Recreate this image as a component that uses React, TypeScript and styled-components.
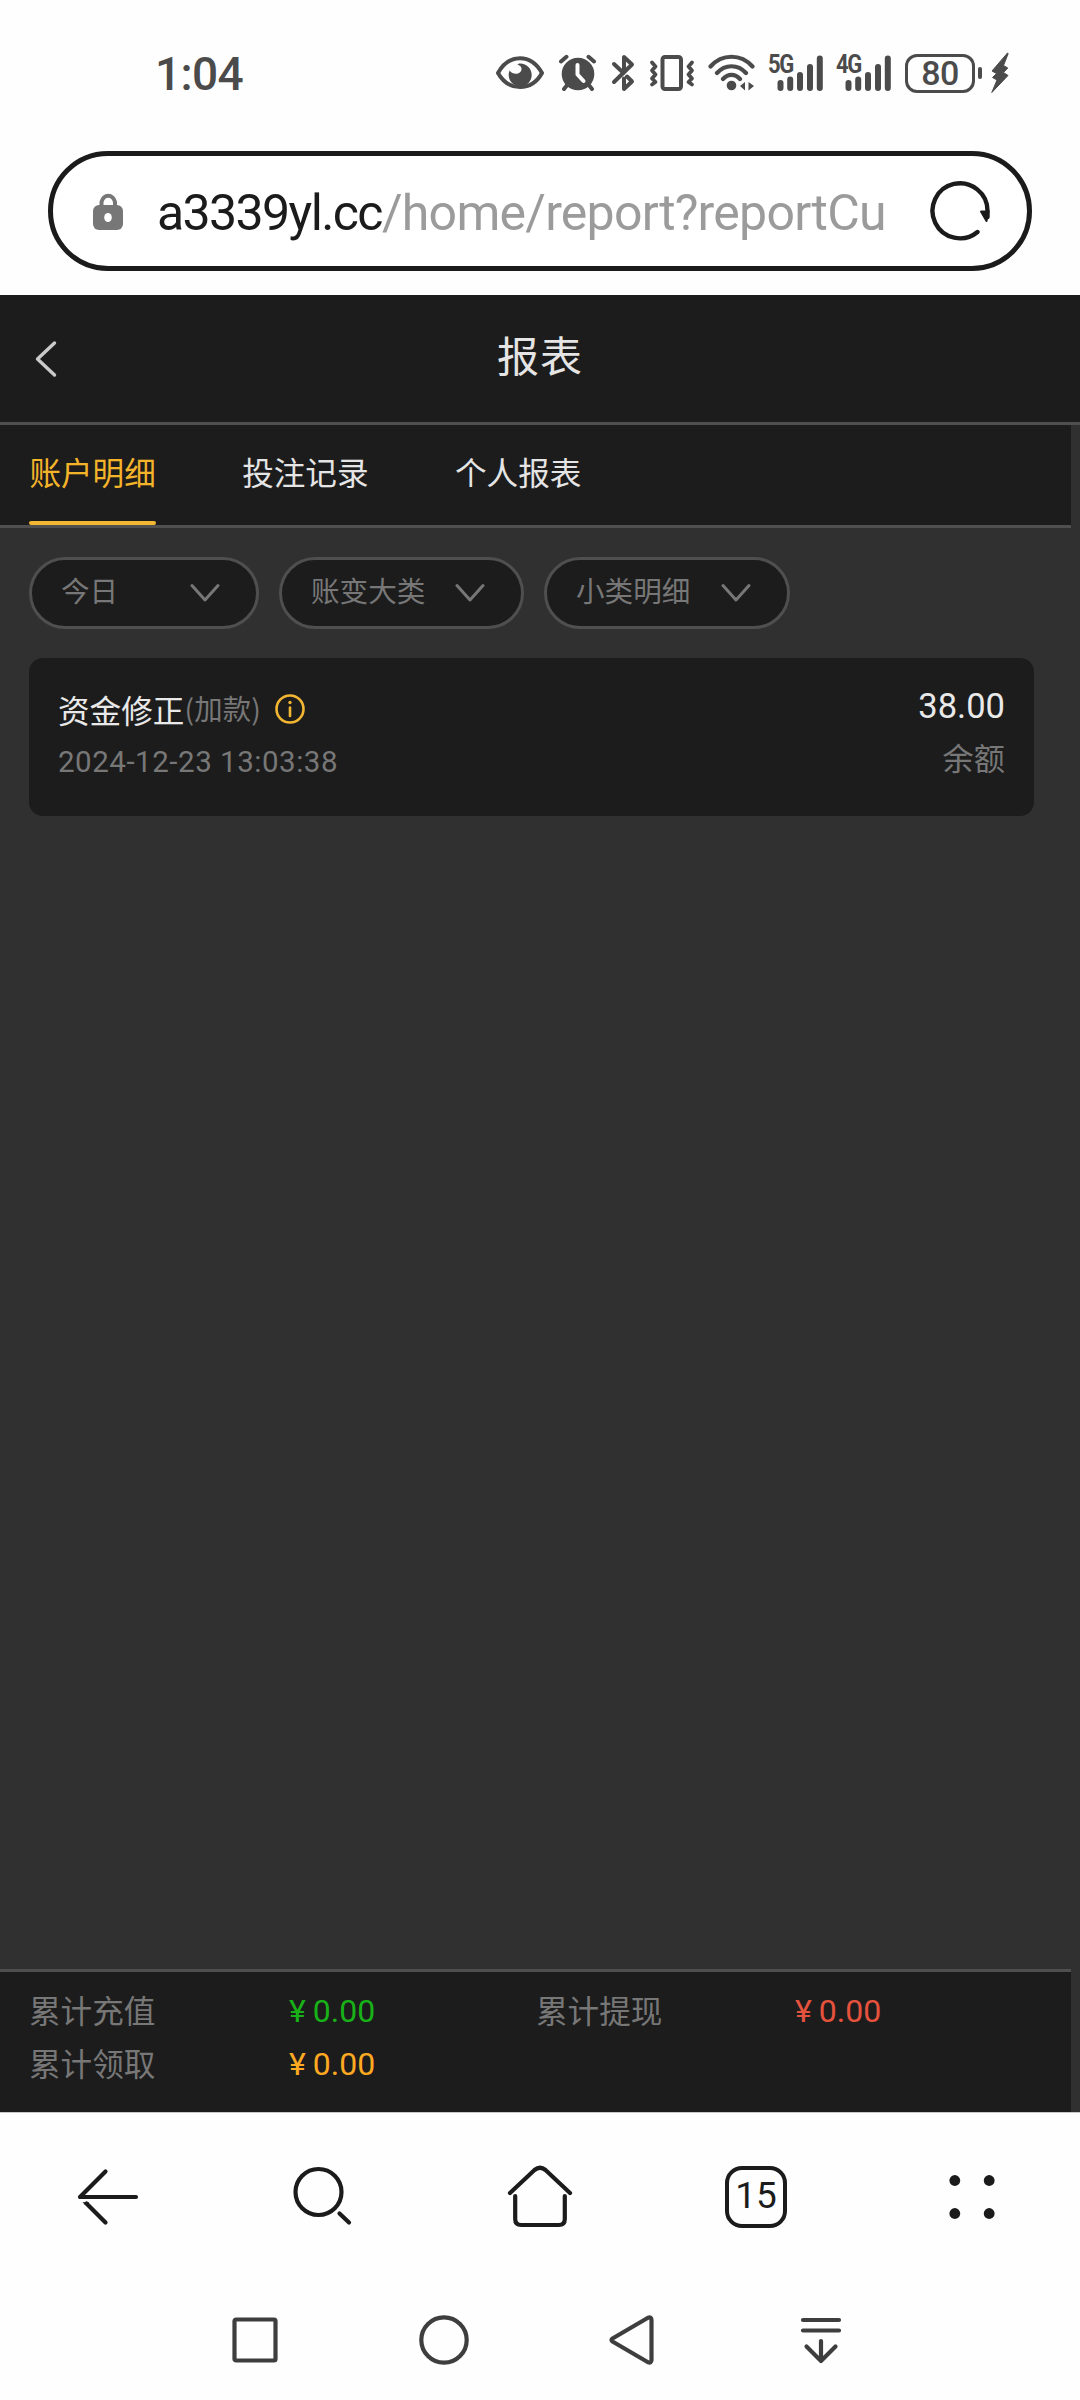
import React from "react";
import styled, { createGlobalStyle } from "styled-components";

const GlobalStyle = createGlobalStyle`
  * { box-sizing: border-box; }
  body { margin: 0; background: #fff; }
`;

const latin = `Roboto, "Noto Sans CJK SC", sans-serif`;
const cjk = `"Noto Sans CJK SC", Roboto, sans-serif`;

const Screen = styled.div`
  width: 1080px;
  height: 2400px;
  display: flex;
  flex-direction: column;
  background: #fefefe;
  font-family: ${cjk};
  overflow: hidden;
  svg { display: block; flex: none; }
`;

const StatusBar = styled.div`
  height: 151px;
  flex: none;
  display: flex;
  justify-content: space-between;
  align-items: flex-start;
  padding: 49px 71px 0 155px;
`;
const Clock = styled.div`
  font: 500 46px/50px ${latin};
  letter-spacing: -0.6px;
  color: #4b4b4b;
`;
const StatusIcons = styled.div`
  display: flex;
  align-items: center;
  height: 48px;
`;
const Slot = styled.div<{ $gap?: number }>`
  margin-left: ${(p) => p.$gap ?? 0}px;
`;
const SignalBox = styled.div`
  position: relative;
  width: 55px;
  height: 38px;
`;
const SignalTag = styled.span`
  position: absolute;
  left: -1px;
  top: -1px;
  font: 700 25px/24px ${latin};
  letter-spacing: -1.5px;
  transform: scaleX(0.88);
  transform-origin: left;
  color: #4b4b4b;
`;
const Battery = styled.div`
  width: 70px;
  height: 39px;
  border: 3px solid #4b4b4b;
  border-radius: 12px;
  display: flex;
  align-items: center;
  justify-content: center;
  font: 500 34px/33px ${latin};
  letter-spacing: -0.5px;
  color: #4b4b4b;
`;
const BatteryNub = styled.div`
  width: 4px;
  height: 12px;
  margin-left: 3px;
  border-radius: 2px;
  background: #4b4b4b;
`;

const AddressBar = styled.div`
  flex: none;
  width: 984px;
  height: 120px;
  margin: 0 48px 24px;
  border: 5px solid #1b1b1b;
  border-radius: 60px;
  display: flex;
  align-items: center;
  padding: 0 36px 0 40px;
  background: #fff;
`;
const Url = styled.div`
  flex: 1;
  margin-left: 32px;
  padding-top: 3px;
  white-space: nowrap;
  font: 400 50px/60px ${latin};
  letter-spacing: -1.6px;
  color: #1b1b1b;
`;
const UrlPath = styled.span`
  color: #9b9b9b;
  letter-spacing: -0.75px;
`;

const Page = styled.main`
  flex: none;
  height: 1817px;
  display: flex;
  flex-direction: column;
  background: #303030;
`;
const TitleBar = styled.header`
  flex: none;
  height: 130px;
  display: grid;
  grid-template-columns: 90px 1fr 90px;
  align-items: center;
  background: #1c1c1c;
  border-bottom: 3px solid #4f4f4f;
`;
const BackButton = styled.div`
  padding-left: 34px;
`;
const Title = styled.h1`
  margin: 0;
  padding-bottom: 9px;
  text-align: center;
  font: 400 42px/60px ${cjk};
  letter-spacing: 1px;
  color: #e5e5e5;
`;
const Content = styled.div`
  flex: 1;
  width: 1071px;
  display: flex;
  flex-direction: column;
`;
const Tabs = styled.nav`
  flex: none;
  height: 103px;
  display: flex;
  gap: 86.4px;
  padding-left: 29.4px;
  background: #1c1c1c;
  border-bottom: 3px solid #4f4f4f;
`;
const Tab = styled.div<{ $active?: boolean }>`
  height: 100px;
  padding-top: 20px;
  font: 400 31.6px/52px ${cjk};
  color: ${(p) => (p.$active ? "#f4b42a" : "#e5e5e5")};
  display: flex;
  flex-direction: column;
  justify-content: space-between;
  &::after {
    content: "";
    height: 4px;
    border-radius: 2px;
    background: ${(p) => (p.$active ? "#f2b632" : "transparent")};
  }
`;
const Filters = styled.div`
  flex: none;
  display: flex;
  gap: 20px;
  padding: 29px 29px 0;
`;
const Pill = styled.div<{ $width: number }>`
  width: ${(p) => p.$width}px;
  height: 72px;
  border: 3px solid #4f4f4f;
  border-radius: 36px;
  background: #1c1c1c;
  display: flex;
  align-items: center;
  justify-content: space-between;
  padding: 0 36px 0 29px;
`;
const PillText = styled.span`
  padding-bottom: 6px;
  font: 400 28.6px/40px ${cjk};
  color: #777;
`;
const Card = styled.section`
  flex: none;
  width: 1005px;
  height: 158px;
  margin: 29px 0 0 29px;
  padding: 29px 29px 0;
  border-radius: 14px;
  background: #1c1c1c;
  display: flex;
  justify-content: space-between;
`;
const CardColumn = styled.div<{ $end?: boolean }>`
  display: flex;
  flex-direction: column;
  align-items: ${(p) => (p.$end ? "flex-end" : "flex-start")};
  gap: ${(p) => (p.$end ? 7 : 9)}px;
  margin-top: ${(p) => (p.$end ? -3 : 0)}px;
`;
const CardTitle = styled.div`
  display: flex;
  height: 44px;
  font: 400 31.6px/44px ${cjk};
  color: #e9e9e9;
`;
const CardKind = styled.span`
  margin-right: 14px;
  font-size: 28.4px;
  line-height: 42px;
  letter-spacing: 0.2px;
  color: #777;
`;
const InfoSlot = styled.span`
  padding-top: 7px;
`;
const CardDate = styled.div`
  font: 400 29.5px/44px ${latin};
  letter-spacing: 0.53px;
  color: #777;
`;
const Amount = styled.div`
  font: 400 34.5px/44px ${latin};
  color: #e9e9e9;
`;
const Balance = styled.div`
  font: 400 31.2px/44px ${cjk};
  color: #777;
`;
const Totals = styled.footer`
  flex: none;
  height: 143px;
  margin-top: auto;
  padding: 11px 0 0 29px;
  display: grid;
  grid-template-columns: 260px 247px 259px 1fr;
  grid-auto-rows: 53px;
  background: #1c1c1c;
  border-top: 3px solid #4f4f4f;
`;
const TotalLabel = styled.div`
  font: 400 31.6px/53px ${cjk};
  color: #777;
`;
const TotalValue = styled.div<{ $color: string }>`
  font: 400 32px/57px ${latin};
  color: ${(p) => p.$color};
`;
const Yen = styled.span`
  margin-right: 7px;
`;

const BrowserBar = styled.div`
  flex: none;
  height: 170px;
  padding-bottom: 2px;
  border-top: 1px solid #c8c8c8;
  display: grid;
  grid-template-columns: repeat(5, 216px);
  justify-items: center;
  align-items: center;
`;
const TabCount = styled.div`
  width: 62px;
  height: 62px;
  border: 4.4px solid #1b1b1b;
  border-radius: 17px;
  display: flex;
  justify-content: center;
  padding-bottom: 2px;
  align-items: center;
  font: 400 37px/40px ${latin};
  color: #1b1b1b;
`;
const SystemBar = styled.div`
  flex: none;
  height: 116px;
  padding: 0 165px 0 161px;
  display: grid;
  grid-template-columns: repeat(4, 1fr);
  justify-items: center;
  align-items: center;
`;

const G = "#4b4b4b";

const Eye = () => (
  <svg width="48" height="34" viewBox="0 0 48 34" fill="none">
    <path d="M2 17C7 8 15 2.2 24 2.2S41 8 46 17C41 26 33 31 24 31S7 26 2 17Z" stroke={G} strokeWidth="4" strokeLinejoin="round" />
    <path d="M24 7.5A11.5 11.5 0 1 1 13.6 14.5C17 19.5 26 18.500 25.500 12.500C25.300 10 22.500 8.800 21.500 8.800C22 8 23 7.500 24 7.500Z" fill={G} />
  </svg>
);
const Alarm = () => (
  <svg width="40" height="38" viewBox="0 0 40 38" fill="none" strokeLinecap="round">
    <circle cx="20" cy="20" r="16.3" fill={G} />
    <path d="M3 7.500L8.500 2.800M36 7.500L30.500 2.800M6 35L10 30M34 35L30 30" stroke={G} strokeWidth="4" />
    <path d="M19.500 11V20.500L25.500 27" stroke="#fefefe" strokeWidth="4" strokeLinejoin="round" />
  </svg>
);
const Bluetooth = () => (
  <svg width="24" height="38" viewBox="0 0 24 38" fill="none" stroke={G} strokeWidth="4" strokeLinecap="round" strokeLinejoin="round">
    <path d="M3 10L12.500 19M3 28L21 10.500L13 3V15M13 24.500V35L21 27.500L16 22.500" />
  </svg>
);
const Vibrate = () => (
  <svg width="46" height="38" viewBox="0 0 46 38" fill="none" stroke={G} strokeWidth="4" strokeLinecap="round" strokeLinejoin="round">
    <rect x="13.500" y="3" width="18.500" height="32" rx="2.500" />
    <path d="M3 8.500L6.500 12.500L3 16.500L6.500 20.500L3 24.500L6.500 28L3 30.500M43 8.500L39.500 12.500L43 16.500L39.500 20.500L43 24.500L39.500 28L43 30.500" strokeWidth="3.800" />
  </svg>
);
const Wifi = () => (
  <svg width="48" height="38" viewBox="0 0 48 38" fill="none" stroke={G} strokeWidth="4.200" strokeLinecap="round">
    <path d="M2.500 12.500C14 -.5 33 -.5 44.500 12.500M9 19C17 10 30 10 38 19M15 25C20 19.500 27 19.500 32 25" />
    <circle cx="23.500" cy="31.500" r="4.800" fill={G} stroke="none" />
    <path d="M37 28V36.500L32 32ZM40.500 28V36.500L46 32Z" fill={G} stroke="none" />
  </svg>
);
const Signal = ({ label }: { label: string }) => (
  <SignalBox>
    <SignalTag>{label}</SignalTag>
    <svg width="55" height="38" viewBox="0 0 55 38" stroke={G} strokeWidth="6" strokeLinecap="round">
      <path d="M11.500 29V34M21.200 25.500V34M31 21V34M41 13V34M50.800 4.500V34" />
    </svg>
  </SignalBox>
);
const Bolt = () => (
  <svg width="18" height="42" viewBox="0 0 18 42">
    <path d="M16.500 1L1 19L5.500 21.500L1.500 25.500L6 28L.8 40.500L17 23.500L12.500 20.500L16.800 16L12.500 13.500L17.200 1.500Z" fill={G} stroke={G} strokeWidth="1" strokeLinejoin="round" />
  </svg>
);
const Lock = () => (
  <svg width="32" height="42" viewBox="0 0 32 42">
    <path d="M8.500 18V12A7 8.500 0 0 1 22 12V18" fill="none" stroke="#777" strokeWidth="4" />
    <rect x="0" y="15" width="30" height="25" rx="6" fill="#777" />
    <ellipse cx="15" cy="27.500" rx="3.800" ry="4.500" fill="#fff" />
  </svg>
);
const Reload = () => (
  <svg width="62" height="62" viewBox="0 0 62 62" fill="none">
    <path d="M48.500 52A27.500 27.500 0 1 1 58.500 31V37" stroke="#1b1b1b" strokeWidth="4.400" strokeLinecap="round" />
    <path d="M52 31.500H59.500L57.500 41Z" fill="#1b1b1b" stroke="#1b1b1b" strokeWidth="2" strokeLinejoin="round" />
  </svg>
);
const BackChevron = () => (
  <svg width="24" height="38" viewBox="0 0 24 38" fill="none" stroke="#cacaca" strokeWidth="3.400" strokeLinecap="round" strokeLinejoin="round">
    <path d="M20.500 3L3.500 19L20.500 35" />
  </svg>
);
const Chevron = () => (
  <svg width="30" height="20" viewBox="0 0 30 20" fill="none" stroke="#777" strokeWidth="3" strokeLinecap="round" strokeLinejoin="round">
    <path d="M2 2.500L15 17L28 2.500" />
  </svg>
);
const Info = () => (
  <svg width="30" height="30" viewBox="0 0 30 30" fill="none" stroke="#f2b632" strokeWidth="2.600" strokeLinecap="round">
    <circle cx="15" cy="15" r="13.500" />
    <path d="M15 13.500V22" />
    <circle cx="15" cy="8.500" r="1.700" fill="#f2b632" stroke="none" />
  </svg>
);

const line = { fill: "none", stroke: "#1b1b1b", strokeWidth: 4.2, strokeLinecap: "round", strokeLinejoin: "round" } as const;
const sys = { fill: "none", stroke: "#3e3e3e", strokeWidth: 4.2, strokeLinecap: "round", strokeLinejoin: "round" } as const;

const ArrowLeft = () => (
  <svg width="64" height="64" viewBox="0 0 64 64" {...line}>
    <path d="M29.500 6.500L4 32H60" />
    <path d="M10.500 38.500L29.500 57.500" />
    <path d="M6.500 37.200L13 37.200L12 40L9 40Z" fill="#1b1b1b" stroke="none" />
  </svg>
);
const Search = () => (
  <svg width="64" height="64" viewBox="0 0 64 64" {...line}>
    <ellipse cx="26.500" cy="27" rx="23" ry="23" />
    <path d="M47.500 48.500L57 57.500" />
  </svg>
);
const Home = () => (
  <svg width="68" height="64" viewBox="0 0 68 64" {...line}>
    <path d="M4 28L28.500 5Q34 .5 39.500 5L64 28" />
    <path d="M9.200 31V54Q9.200 60 15.200 60H52.800Q58.800 60 58.800 54V31" />
  </svg>
);
const Dots = () => (
  <svg width="46" height="46" viewBox="0 0 46 46" fill="#1b1b1b">
    <circle cx="5.800" cy="6.500" r="5.400" />
    <circle cx="40.200" cy="6.500" r="5.400" />
    <circle cx="5.800" cy="39.500" r="5.400" />
    <circle cx="40.200" cy="39.500" r="5.400" />
  </svg>
);
const Recents = () => (
  <svg width="46" height="46" viewBox="0 0 46 46" {...sys}>
    <rect x="2.500" y="2.500" width="41" height="41" rx="1.500" />
  </svg>
);
const Circle = () => (
  <svg width="50" height="50" viewBox="0 0 50 50" {...sys}>
    <circle cx="25" cy="25" r="22.700" />
  </svg>
);
const Triangle = () => (
  <svg width="46" height="52" viewBox="0 0 46 52" {...sys}>
    <path d="M3.500 24.500L39 3.700Q42.500 2.500 42.500 6V46Q42.500 49.500 39 48.300L3.500 27.500Q1.500 26 3.500 24.500Z" />
  </svg>
);
const Collapse = () => (
  <svg width="42" height="48" viewBox="0 0 42 48" {...sys}>
    <path d="M3 4H39M3 14.500H39M21 25V45M6.500 30.500L21 45L35.500 30.500" />
  </svg>
);

const tabs = ["账户明细", "投注记录", "个人报表"];
const filters = [
  { text: "今日", width: 230 },
  { text: "账变大类", width: 245 },
  { text: "小类明细", width: 246 },
];
const totals = [
  { label: "累计充值", color: "#18b118" },
  { label: "累计提现", color: "#e5523e" },
  { label: "累计领取", color: "#fea922" },
];

export default function App() {
  return (
    <Screen>
      <GlobalStyle />
      <StatusBar>
        <Clock>1:04</Clock>
        <StatusIcons>
          <Eye />
          <Slot $gap={14}><Alarm /></Slot>
          <Slot $gap={13}><Bluetooth /></Slot>
          <Slot $gap={14}><Vibrate /></Slot>
          <Slot $gap={13}><Wifi /></Slot>
          <Slot $gap={13}><Signal label="5G" /></Slot>
          <Slot $gap={13}><Signal label="4G" /></Slot>
          <Slot $gap={13}><Battery>80</Battery></Slot>
          <BatteryNub />
          <Slot $gap={9}><Bolt /></Slot>
        </StatusIcons>
      </StatusBar>
      <AddressBar>
        <Lock />
        <Url>a3339yl.cc<UrlPath>/home/report?reportCu</UrlPath></Url>
        <Reload />
      </AddressBar>
      <Page>
        <TitleBar>
          <BackButton><BackChevron /></BackButton>
          <Title>报表</Title>
        </TitleBar>
        <Content>
          <Tabs>
            {tabs.map((t, i) => <Tab key={t} $active={i === 0}>{t}</Tab>)}
          </Tabs>
          <Filters>
            {filters.map((f) => (
              <Pill key={f.text} $width={f.width}>
                <PillText>{f.text}</PillText>
                <Chevron />
              </Pill>
            ))}
          </Filters>
          <Card>
            <CardColumn>
              <CardTitle>
                资金修正<CardKind>(加款)</CardKind>
                <InfoSlot><Info /></InfoSlot>
              </CardTitle>
              <CardDate>2024-12-23 13:03:38</CardDate>
            </CardColumn>
            <CardColumn $end>
              <Amount>38.00</Amount>
              <Balance>余额</Balance>
            </CardColumn>
          </Card>
          <Totals>
            {totals.map((t) => (
              <React.Fragment key={t.label}>
                <TotalLabel>{t.label}</TotalLabel>
                <TotalValue $color={t.color}><Yen>¥</Yen>0.00</TotalValue>
              </React.Fragment>
            ))}
          </Totals>
        </Content>
      </Page>
      <BrowserBar>
        <ArrowLeft />
        <Search />
        <Home />
        <TabCount>15</TabCount>
        <Dots />
      </BrowserBar>
      <SystemBar>
        <Recents />
        <Circle />
        <Triangle />
        <Collapse />
      </SystemBar>
    </Screen>
  );
}
